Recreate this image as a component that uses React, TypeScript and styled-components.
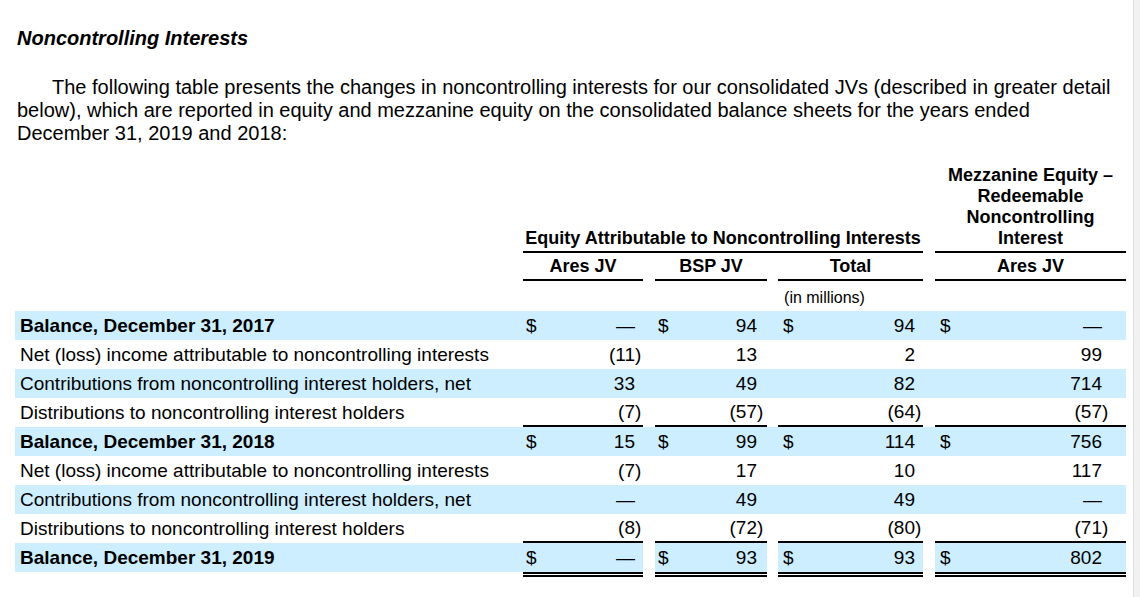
import React from "react";
import styled, { createGlobalStyle } from "styled-components";

const BLUE = "#cceeff";
const COLS = "508px 120px 12px 112px 11px 145px 12px 191px";

const GlobalStyle = createGlobalStyle`
  html, body { margin: 0; padding: 0; background: #fff; }
  body { font-family: "Liberation Sans", Arial, sans-serif; color: #000; }
`;

const Page = styled.div`
  display: flex;
  width: 1140px;
  height: 597px;
  overflow: hidden;
`;

const Content = styled.div`
  flex: 1;
  padding: 26px 0 0 15px;
`;

const Edge = styled.div`
  width: 6px;
  background: #f1f1f1;
  border-left: 1px solid #dedede;
`;

const Title = styled.h2`
  margin: 0 0 0 2px;
  font-size: 20px;
  line-height: 24px;
  font-weight: bold;
  font-style: italic;
`;

const Paragraph = styled.p`
  margin: 26px 0 0 2px;
  width: 1103px;
  font-size: 20px;
  line-height: 23px;
  text-indent: 35px;
`;

const Table = styled.div`
  margin-top: 20px;
  width: 1111px;
`;

const HeaderGrid = styled.div`
  display: grid;
  grid-template-columns: ${COLS};
  font-size: 18px;
  font-weight: bold;
  line-height: 21px;
  text-align: center;
`;

const GroupHead = styled.div<{ $col: string }>`
  grid-column: ${(p) => p.$col};
  grid-row: 1;
  align-self: end;
  padding-bottom: 2px;
  border-bottom: 2px solid #000;
`;

const SubHead = styled.div<{ $col: number }>`
  grid-column: ${(p) => p.$col};
  grid-row: 2;
  padding: 3px 0 2px;
  border-bottom: 2px solid #000;
`;

const Units = styled.div`
  display: grid;
  grid-template-columns: ${COLS};
  height: 30px;
  box-sizing: border-box;
  padding-top: 8px;
  font-size: 16px;
  line-height: 18px;
`;

const UnitsText = styled.div`
  grid-column: 2 / 9;
  text-align: center;
`;

const Row = styled.div<{ $shaded?: boolean; $final?: boolean }>`
  display: grid;
  grid-template-columns: ${COLS};
  align-items: start;
  background: ${(p) => (p.$shaded && !p.$final ? BLUE : "transparent")};
  font-size: 19px;
`;

const Label = styled.div<{ $bold?: boolean; $fill?: boolean }>`
  height: 29px;
  box-sizing: border-box;
  padding-left: 5px;
  display: flex;
  align-items: center;
  font-weight: ${(p) => (p.$bold ? "bold" : "normal")};
  background: ${(p) => (p.$fill ? BLUE : "transparent")};
  white-space: nowrap;
`;

const Gap = styled.div``;

const Value = styled.div<{
  $pl: number;
  $pr: number;
  $rule?: "single" | "double";
  $fill?: boolean;
}>`
  box-sizing: border-box;
  height: ${(p) => (p.$rule === "double" ? "34px" : "29px")};
  padding: 0 ${(p) => p.$pr}px 0 ${(p) => p.$pl}px;
  display: flex;
  align-items: ${(p) => (p.$rule === "double" ? "flex-start" : "center")};
  line-height: 29px;
  background: ${(p) => (p.$fill ? BLUE : "transparent")};
  background-clip: padding-box;
  border-bottom: ${(p) =>
    p.$rule === "single"
      ? "2px solid #000"
      : p.$rule === "double"
      ? "5px double #000"
      : "none"};
`;

const Dollar = styled.span``;

const Num = styled.span`
  flex: 1;
  text-align: right;
`;

const Paren = styled.span`
  width: 6px;
  text-align: left;
`;

const columns = [
  { col: 2, pl: 3, pr: 2 },
  { col: 4, pl: 3, pr: 4 },
  { col: 6, pl: 5, pr: 2 },
  { col: 8, pl: 5, pr: 18 },
];

type RowData = {
  label: string;
  values: string[];
  bold?: boolean;
  shaded?: boolean;
  dollar?: boolean;
  rule?: "single" | "double";
};

const rows: RowData[] = [
  { label: "Balance, December 31, 2017", bold: true, shaded: true, dollar: true, values: ["—", "94", "94", "—"] },
  { label: "Net (loss) income attributable to noncontrolling interests", values: ["(11)", "13", "2", "99"] },
  { label: "Contributions from noncontrolling interest holders, net", shaded: true, values: ["33", "49", "82", "714"] },
  { label: "Distributions to noncontrolling interest holders", rule: "single", values: ["(7)", "(57)", "(64)", "(57)"] },
  { label: "Balance, December 31, 2018", bold: true, shaded: true, dollar: true, values: ["15", "99", "114", "756"] },
  { label: "Net (loss) income attributable to noncontrolling interests", values: ["(7)", "17", "10", "117"] },
  { label: "Contributions from noncontrolling interest holders, net", shaded: true, values: ["—", "49", "49", "—"] },
  { label: "Distributions to noncontrolling interest holders", rule: "single", values: ["(8)", "(72)", "(80)", "(71)"] },
  { label: "Balance, December 31, 2019", bold: true, shaded: true, dollar: true, rule: "double", values: ["—", "93", "93", "802"] },
];

function splitParen(v: string): [string, string] {
  return v.endsWith(")") ? [v.slice(0, -1), ")"] : [v, ""];
}

export default function App() {
  return (
    <>
      <GlobalStyle />
      <Page>
        <Content>
          <Title>Noncontrolling Interests</Title>
          <Paragraph>
            The following table presents the changes in noncontrolling interests for our consolidated JVs
            (described in greater detail below), which are reported in equity and mezzanine equity on the
            consolidated balance sheets for the years ended December 31, 2019 and 2018:
          </Paragraph>
          <Table>
            <HeaderGrid>
              <GroupHead $col="2 / 7">Equity Attributable to Noncontrolling Interests</GroupHead>
              <GroupHead $col="8">
                Mezzanine Equity –<br />
                Redeemable
                <br />
                Noncontrolling
                <br />
                Interest
              </GroupHead>
              <SubHead $col={2}>Ares JV</SubHead>
              <SubHead $col={4}>BSP JV</SubHead>
              <SubHead $col={6}>Total</SubHead>
              <SubHead $col={8}>Ares JV</SubHead>
            </HeaderGrid>
            <Units>
              <UnitsText>(in millions)</UnitsText>
            </Units>
            {rows.map((r, i) => {
              const final = r.rule === "double";
              return (
                <Row key={i} $shaded={r.shaded} $final={final}>
                  <Label $bold={r.bold} $fill={final}>
                    {r.label}
                  </Label>
                  {columns.map((c, j) => {
                    const [num, paren] = splitParen(r.values[j]);
                    return (
                      <React.Fragment key={j}>
                        <Value $pl={c.pl} $pr={c.pr} $rule={r.rule} $fill={final}>
                          <Dollar>{r.dollar ? "$" : ""}</Dollar>
                          <Num>{num}</Num>
                          <Paren>{paren}</Paren>
                        </Value>
                        {j < 3 && <Gap />}
                      </React.Fragment>
                    );
                  })}
                </Row>
              );
            })}
          </Table>
        </Content>
        <Edge />
      </Page>
    </>
  );
}
